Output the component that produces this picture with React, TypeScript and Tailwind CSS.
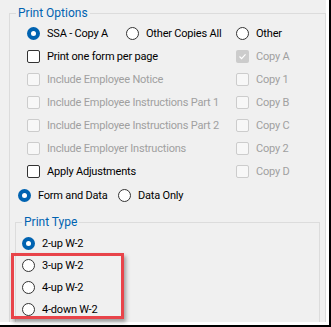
import React from "react";

const font = "font-['Segoe_UI',Roboto,sans-serif]";

function Radio({ checked = false }: { checked?: boolean }) {
  if (checked) {
    return (
      <span className="flex h-[13px] w-[13px] shrink-0 items-center justify-center rounded-full bg-[#0063b1]">
        <span className="h-[5px] w-[5px] rounded-full bg-white" />
      </span>
    );
  }
  return <span className="h-[13px] w-[13px] shrink-0 rounded-full border border-[#333333] bg-white" />;
}

function Check({ checked = false, disabled = false }: { checked?: boolean; disabled?: boolean }) {
  if (checked && disabled) {
    return (
      <span className="flex h-[13px] w-[13px] shrink-0 items-center justify-center rounded-[2px] bg-[#cccccc]">
        <svg width="9" height="9" viewBox="0 0 9 9">
          <path d="M1.5 4.5 L3.6 6.6 L7.5 2.4" fill="none" stroke="#ffffff" strokeWidth="1.2" />
        </svg>
      </span>
    );
  }
  return (
    <span
      className={`h-[13px] w-[13px] shrink-0 rounded-[2px] border ${
        disabled ? "border-[#cccccc] bg-[#f7f7f7]" : "border-[#333333] bg-white"
      }`}
    />
  );
}

function Item({
  kind,
  label,
  checked,
  disabled,
  width,
}: {
  kind: "radio" | "check";
  label: string;
  checked?: boolean;
  disabled?: boolean;
  width?: string;
}) {
  return (
    <div className={`flex items-center gap-[7px] ${width ?? ""}`}>
      {kind === "radio" ? <Radio checked={checked} /> : <Check checked={checked} disabled={disabled} />}
      <span className={`whitespace-nowrap leading-none ${disabled ? "text-[#a0a0a0]" : "text-black"}`}>{label}</span>
    </div>
  );
}

const leftRows = [
  "Include Employee Notice",
  "Include Employee Instructions Part 1",
  "Include Employee Instructions Part 2",
  "Include Employer Instructions",
];
const copies = ["Copy 1", "Copy B", "Copy C", "Copy 2"];

export default function App() {
  return (
    <div
      className={`relative h-[327px] w-[331px] overflow-hidden border-b-2 border-r-2 border-black bg-white text-[11px] tracking-[-0.2px] ${font}`}
    >
      <div className="h-[322px] w-[326px] overflow-hidden bg-[#f0f0f0]">
        <fieldset className="ml-[9px] mt-[5px] h-[340px] w-[317px] border border-[#dcdcdc]">
          <legend className="ml-[6px] px-[2px] text-[12px] leading-[16px] tracking-normal text-[#0063b1]">Print Options</legend>

          <div className="pl-[17px] pt-[1px]">
            <div className="flex h-[23px] items-center">
              <Item kind="radio" label="SSA - Copy A" checked width="w-[99px]" />
              <Item kind="radio" label="Other Copies All" width="w-[110px]" />
              <Item kind="radio" label="Other" />
            </div>
            <div className="flex h-[23px] items-center">
              <Item kind="check" label="Print one form per page" width="w-[209px]" />
              <Item kind="check" label="Copy A" checked disabled />
            </div>
            {leftRows.map((l, i) => (
              <div key={l} className="flex h-[23px] items-center">
                <Item kind="check" label={l} disabled width="w-[209px]" />
                <Item kind="check" label={copies[i]} disabled />
              </div>
            ))}
            <div className="flex h-[23px] items-center">
              <Item kind="check" label="Apply Adjustments" width="w-[209px]" />
              <Item kind="check" label="Copy D" disabled />
            </div>
          </div>

          <div className="flex h-[24px] items-center pl-[8px]">
            <Item kind="radio" label="Form and Data" checked width="w-[100px]" />
            <Item kind="radio" label="Data Only" />
          </div>

          <fieldset className="ml-[5px] mt-[7px] h-[120px] w-[305px] border border-[#dcdcdc]">
            <legend className="ml-[6px] px-[2px] text-[12px] leading-[16px] tracking-normal text-[#0063b1]">Print Type</legend>
            <div className="pl-[6px] pt-[2px]">
              <div className="flex h-[22px] items-center">
                <Item kind="radio" label="2-up W-2" checked />
              </div>
              <div className="flex h-[22px] items-center">
                <Item kind="radio" label="3-up W-2" />
              </div>
              <div className="flex h-[23px] items-center">
                <Item kind="radio" label="4-up W-2" />
              </div>
              <div className="flex h-[21px] items-center">
                <Item kind="radio" label="4-down W-2" />
              </div>
            </div>
          </fieldset>
        </fieldset>
      </div>

      <div className="absolute left-[11px] top-[253px] h-[66px] w-[113px] border-[3px] border-[#e8444a] shadow-[2px_3px_4px_rgba(0,0,0,0.35)]" />
    </div>
  );
}
